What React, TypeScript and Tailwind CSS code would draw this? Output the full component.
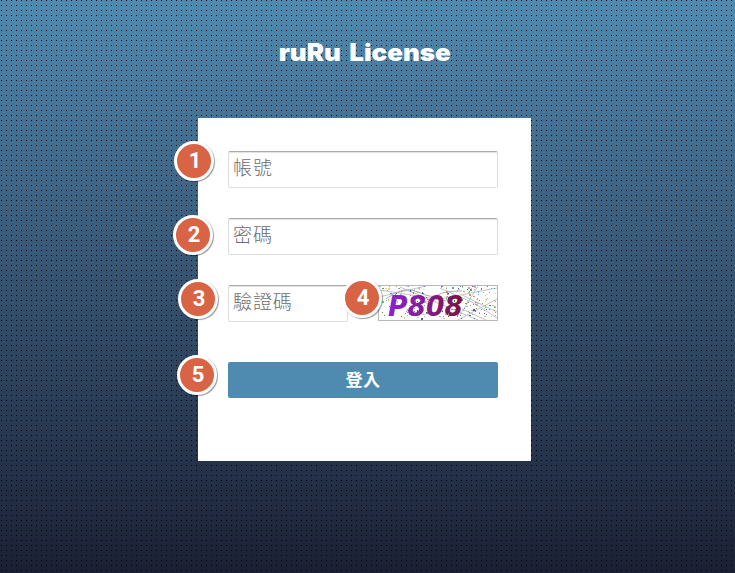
const CJK = "font-['Liberation_Sans','Noto_Sans_CJK_TC',sans-serif]";

const noiseColors = ["#7b35c4", "#2b8a3e", "#d946a8", "#3b5bdb", "#555555", "#e07a2f", "#22a6b3", "#888888", "#b8d050", "#30d070"];

// Small linear congruential generator keeps the captcha speckles stable.
function makeNoise(count: number) {
  let seed = 71;
  const next = () => {
    seed = (seed * 16807) % 2147483647;
    return seed / 2147483647;
  };
  return Array.from({ length: count }, () => {
    const x = Math.floor(next() * 117) + 1;
    const y = Math.floor(next() * 33) + 1;
    const color = noiseColors[Math.floor(next() * noiseColors.length)];
    const opacity = 0.35 + next() * 0.65;
    return { x, y, color, opacity };
  });
}

const noise = makeNoise(270);
const inkNoise = noise.filter((n, i) => i % 5 === 0 && n.x > 12 && n.x < 82);

function Captcha() {
  return (
    <svg width="120" height="36" viewBox="0 0 120 36" className="block shrink-0 overflow-visible">
      <defs>
        <linearGradient id="ink" gradientUnits="userSpaceOnUse" x1="10" y1="0" x2="86" y2="0">
          <stop offset="0" stopColor="#8a22d8" />
          <stop offset="0.5" stopColor="#841b91" />
          <stop offset="1" stopColor="#7c1038" />
        </linearGradient>
      </defs>
      <rect x="0.5" y="0.5" width="119" height="35" fill="#fff" stroke="#b9b9b9" />
      <g fill="none" stroke="#c4c4c4" strokeWidth="1">
        <path d="M2 5L70 16M22 2L100 35M40 18L119 3M84 10L119 27M80 35L119 14M1 12L48 1M84 24L108 35M100 1L82 30M62 3L96 18L119 33" />
        <path d="M8 14Q25 0 40 7T60 10T84 6" stroke="#aaa" />
      </g>
      {noise.map((n, i) => (
        <rect key={i} x={n.x} y={n.y} width={i % 4 === 0 ? 2 : 1} height={i % 6 === 0 ? 2 : 1} fill={n.color} opacity={n.opacity} />
      ))}
      <text
        x="10"
        y="31"
        textLength="75"
        lengthAdjust="spacingAndGlyphs"
        fill="url(#ink)"
        className="font-['DejaVu_Sans',sans-serif] text-[29px] font-bold italic"
      >
        P808
      </text>
      {inkNoise.map((n, i) => (
        <rect key={i} x={n.x} y={n.y} width="1" height="1" fill={n.color} opacity="0.8" />
      ))}
    </svg>
  );
}

function DotTexture() {
  return (
    <svg width="735" height="573" className="absolute inset-0" shapeRendering="crispEdges">
      <defs>
        <pattern id="dots" width="5" height="5" patternUnits="userSpaceOnUse">
          <rect x="1" y="0" width="1" height="1" fill="#05070b" />
        </pattern>
      </defs>
      <rect width="735" height="573" fill="url(#dots)" />
    </svg>
  );
}

function Badge({ n, place }: { n: number; place: string }) {
  return (
    <span
      className={`absolute flex size-10 items-center justify-center rounded-full border-[3px] border-white bg-[#d96345] pl-0.5 font-['Roboto',sans-serif] text-[22px] leading-none font-bold text-white shadow-[1px_1px_1px_rgba(0,0,0,0.4)] ${place}`}
    >
      {n}
    </span>
  );
}

function Field({ label, type = "text", width }: { label: string; type?: string; width: string }) {
  return (
    <input
      type={type}
      placeholder={label}
      className={`block h-[37px] rounded-[2px] border border-[#dedede] border-t-[#aaa] bg-white px-1 pb-px text-[19px] font-light tracking-[0.9px] shadow-[inset_0_1px_1px_#e2e2e2] outline-none placeholder:text-[#6c6c6c] ${CJK} ${width}`}
    />
  );
}

export default function App() {
  return (
    <div className="relative h-[573px] w-[735px] overflow-hidden bg-linear-to-b from-[#4f8bb1] to-[#1b2034]">
      <DotTexture />
      <div className="relative flex flex-col items-start pl-[198px]">
        <h1 className="flex h-[118px] w-[333px] items-start justify-center pt-[35px] font-['Inter',sans-serif] text-2xl leading-[36px] font-black whitespace-nowrap text-white">
          <span className="scale-x-[1.08] [word-spacing:3px]">ruRu License</span>
        </h1>
        <form className="flex h-[343px] w-[333px] flex-col bg-white pt-[33px] pr-[33px] pl-[30px]">
          <div className="flex flex-col gap-[30px]">
            <Field label="帳號" width="w-[270px]" />
            <Field label="密碼" type="password" width="w-[270px]" />
            <div className="flex items-start justify-between">
              <Field label="驗證碼" width="w-[120px]" />
              <Captcha />
            </div>
          </div>
          <button
            type="button"
            className={`mt-10 h-9 w-[270px] rounded-[2px] bg-[#4f8bb1] text-[17px] leading-none font-bold tracking-[0.5px] text-white ${CJK}`}
          >
            登入
          </button>
        </form>
      </div>
      <Badge n={1} place="left-[174px] top-[141px]" />
      <Badge n={2} place="left-[173px] top-[215px]" />
      <Badge n={3} place="left-[178px] top-[279px]" />
      <Badge n={4} place="left-[342px] top-[278px]" />
      <Badge n={5} place="left-[177px] top-[355px]" />
    </div>
  );
}
